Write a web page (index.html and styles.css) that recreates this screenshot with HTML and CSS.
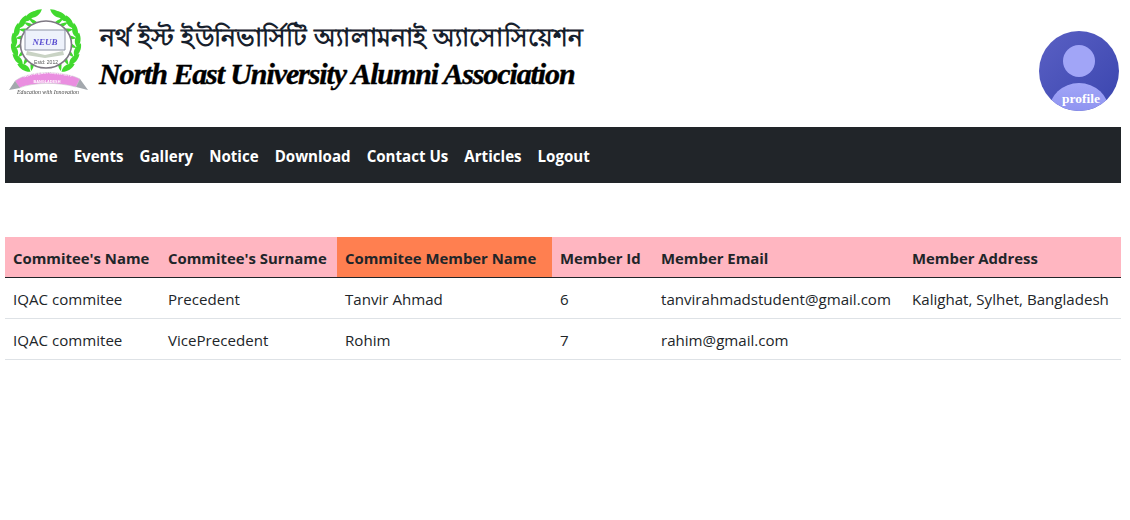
FILE: index.html
```html
<!DOCTYPE html>
<html lang="en">
<head>
<meta charset="utf-8">
<title>North East University Alumni Association</title>
<link rel="stylesheet" href="styles.css">
</head>
<body>
<header class="masthead">
  <div class="brand">
    <svg class="logo" width="80" height="86" viewBox="0 0 80 86" aria-label="NEUB logo">
      <defs>
        <path id="leaf" d="M5 41 C1 37 0 31 2 26 C7 30 9 36 5 41 Z M6 41 C8 38 11 35 15 34 C15 38 11 41 6 41 Z"/>
        <g id="branch" fill="#41d92e">
          <use href="#leaf" transform="rotate(-48 36 34)"/>
          <use href="#leaf" transform="rotate(-30 36 34)"/>
          <use href="#leaf" transform="rotate(-12 36 34)"/>
          <use href="#leaf" transform="rotate(6 36 34)"/>
          <use href="#leaf" transform="rotate(24 36 34)"/>
          <use href="#leaf" transform="rotate(42 36 34)"/>
          <use href="#leaf" transform="rotate(58 36 34)"/>
          <use href="#leaf" transform="rotate(70 36 34)"/>
        </g>
      </defs>
      <use href="#branch"/>
      <use href="#branch" transform="matrix(-1 0 0 1 72 0)"/>
      <ellipse cx="36" cy="34.5" rx="25.5" ry="23.5" fill="#fff" stroke="#7d7882" stroke-width="1.6"/>
      <path d="M15 20 H55 V40 H15 Z" fill="#eef2fb" stroke="#8d93a3" stroke-width="1"/>
      <path d="M17 41 L35 45 L53 41 L54 45 L35 48 L16 45 Z" fill="#c9d3c4"/>
      <text class="logo-mark" x="35" y="35" text-anchor="middle">NEUB</text>
      <text class="logo-est" x="36" y="54" text-anchor="middle">Estd: 2012</text>
      <path d="M5 71 C20 60 52 60 70 69 L66 77 C48 72 24 72 9 78 Z" fill="#ea8ee0" stroke="#c9c9cf" stroke-width=".6"/>
      <path d="M-1 80 L5 71 L10 78 Z M78 80 L70 69 L66 77 Z" fill="#a3a8ad"/>
      <path id="band-arc" d="M9 70 C22 62 50 62 67 69" fill="none"/>
      <text class="logo-band"><textPath href="#band-arc" startOffset="50%" text-anchor="middle">NORTH EAST UNIVERSITY</textPath></text>
      <text class="logo-band" x="37" y="73" text-anchor="middle">BANGLADESH</text>
      <text class="logo-motto" x="38" y="84" text-anchor="middle">Education with Innovation</text>
    </svg>
    <div class="titles">
      <div class="title-bn">নর্থ ইস্ট ইউনিভার্সিটি অ্যালামনাই অ্যাসোসিয়েশন</div>
      <div class="title-en">North East University Alumni Association</div>
    </div>
  </div>
  <a class="avatar" href="#">
    <svg width="80" height="80" viewBox="0 0 80 80" aria-hidden="true">
      <defs>
        <linearGradient id="avatar-bg" x1="0" y1="0" x2="1" y2="1">
          <stop offset="0" stop-color="#5a60c4"/>
          <stop offset="1" stop-color="#3a45ae"/>
        </linearGradient>
        <linearGradient id="avatar-body" x1="0" y1="0" x2="0" y2="1">
          <stop offset="0" stop-color="#a1a5f7"/>
          <stop offset="1" stop-color="#7d83ea"/>
        </linearGradient>
        <clipPath id="avatar-clip"><circle cx="40" cy="40" r="40"/></clipPath>
      </defs>
      <circle cx="40" cy="40" r="40" fill="url(#avatar-bg)"/>
      <circle cx="40" cy="30" r="16" fill="#a1a5f7"/>
      <ellipse cx="40" cy="80" rx="30" ry="28" fill="url(#avatar-body)" clip-path="url(#avatar-clip)"/>
    </svg>
    <span class="avatar-label">profile</span>
  </a>
</header>
<nav class="mainnav">
  <a href="#">Home</a>
  <a href="#">Events</a>
  <a href="#">Gallery</a>
  <a href="#">Notice</a>
  <a href="#">Download</a>
  <a href="#">Contact Us</a>
  <a href="#">Articles</a>
  <a href="#">Logout</a>
</nav>
<table class="committee">
  <colgroup>
    <col class="c1"><col class="c2"><col class="c3"><col class="c4"><col class="c5"><col class="c6">
  </colgroup>
  <thead>
    <tr>
      <th>Commitee's Name</th>
      <th>Commitee's Surname</th>
      <th class="hl">Commitee Member Name</th>
      <th>Member Id</th>
      <th>Member Email</th>
      <th>Member Address</th>
    </tr>
  </thead>
  <tbody>
    <tr>
      <td>IQAC commitee</td><td>Precedent</td><td>Tanvir Ahmad</td><td>6</td>
      <td>tanvirahmadstudent@gmail.com</td><td>Kalighat, Sylhet, Bangladesh</td>
    </tr>
    <tr>
      <td>IQAC commitee</td><td>VicePrecedent</td><td>Rohim</td><td>7</td>
      <td>rahim@gmail.com</td><td></td>
    </tr>
  </tbody>
</table>
</body>
</html>
```
FILE: styles.css
```css
* { box-sizing: border-box; }
body {
  margin: 0 9px 0 5px;
  font-family: "Open Sans", "Noto Sans", sans-serif;
  font-size: 15.1px;
  color: #212529;
  background: #fff;
}
.masthead {
  height: 127px;
  display: flex;
  justify-content: space-between;
  padding: 10px 2px 16px 5px;
}
.brand { display: flex; gap: 9px; height: 86px; }
.logo { flex: none; overflow: visible; filter: blur(.3px); }
.logo-mark { font: italic 700 9px "Liberation Serif", serif; fill: #5b4fd0; }
.logo-est { font: 5px "Liberation Sans", sans-serif; fill: #555; }
.logo-band { font: 700 3.8px "Liberation Sans", sans-serif; fill: #fff; }
.logo-motto { font: italic 5.8px "Liberation Serif", serif; fill: #444; }
.titles { padding-top: 9px; }
.title-bn {
  font-family: "Noto Sans", "Liberation Serif", serif;
  font-size: 25.4px;
  font-weight: 600;
  letter-spacing: .2px;
  line-height: 35px;
  margin-left: 1px;
  color: #16202c;
  white-space: nowrap;
}
.title-en {
  font-family: "Liberation Serif", serif;
  font-style: italic;
  font-weight: 700;
  font-size: 30px;
  letter-spacing: -1.1px;
  line-height: 40px;
  color: #000;
  white-space: nowrap;
  -webkit-text-stroke: .4px #000;
}
.avatar {
  position: relative;
  width: 80px;
  height: 80px;
  margin-top: 21px;
  display: block;
  text-decoration: none;
}
.avatar svg { display: block; }
.avatar-label {
  position: absolute;
  left: 23px;
  top: 60px;
  font: 700 13.5px/16px "Liberation Serif", serif;
  color: #fff;
}
.mainnav {
  height: 56px;
  background: #212529;
  display: flex;
  align-items: center;
  gap: 16px;
  padding: 2px 8px 0;
}
.mainnav a {
  color: #fff;
  font-weight: 700;
  text-decoration: none;
  white-space: nowrap;
}
.committee {
  width: 100%;
  margin-top: 54px;
  border-collapse: collapse;
  table-layout: fixed;
}
.c1 { width: 155px; }
.c2 { width: 177px; }
.c3 { width: 215px; }
.c4 { width: 101px; }
.c5 { width: 251px; }
.c6 { width: 217px; }
.committee th {
  background: #ffb6c1;
  font-size: 14.9px;
  text-align: left;
  padding: 9px 8px 7px;
  height: 40px;
  line-height: 24px;
  border-bottom: 1px solid #212529;
  white-space: nowrap;
}
.committee th.hl { background: #ff7f50; }
.committee td {
  padding: 9px 8px 7px;
  height: 41px;
  line-height: 24px;
  border-bottom: 1px solid #dee2e6;
  white-space: nowrap;
}
```
